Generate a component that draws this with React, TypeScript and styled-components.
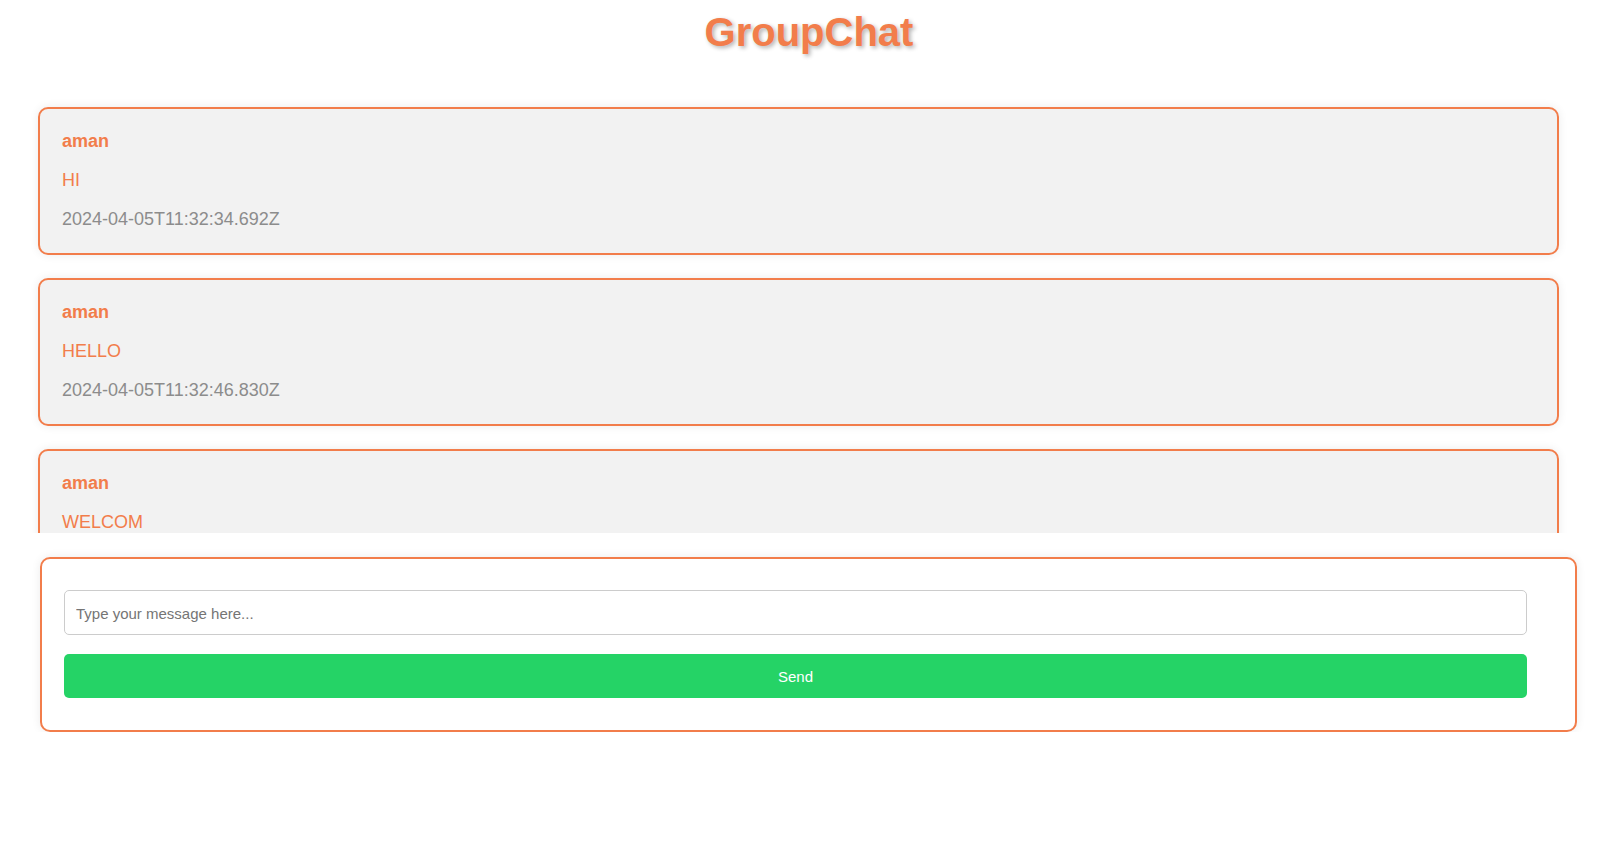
import React, { useState } from "react";
import styled, { createGlobalStyle } from "styled-components";

const ORANGE = "#f27d4b";

const GlobalStyle = createGlobalStyle`
  html, body {
    margin: 0;
    padding: 0;
    background: #ffffff;
    font-family: "Liberation Sans", Arial, sans-serif;
  }
`;

type Message = {
  user: string;
  text: string;
  createdAt: string;
};

const messages: Message[] = [
  { user: "aman", text: "HI", createdAt: "2024-04-05T11:32:34.692Z" },
  { user: "aman", text: "HELLO", createdAt: "2024-04-05T11:32:46.830Z" },
  { user: "aman", text: "WELCOM", createdAt: "2024-04-05T11:33:02.114Z" },
];

export default function App() {
  const [value, setValue] = useState("");

  return (
    <>
      <GlobalStyle />
      <SPage>
        <STitle>GroupChat</STitle>
        <SMessageList>
          {messages.map((m, i) => (
            <SMessageCard key={i}>
              <SUser>{m.user}</SUser>
              <SText>{m.text}</SText>
              <STime>{m.createdAt}</STime>
            </SMessageCard>
          ))}
        </SMessageList>
        <SForm onSubmit={(e) => e.preventDefault()}>
          <SInput
            type="text"
            placeholder="Type your message here..."
            value={value}
            onChange={(e) => setValue(e.target.value)}
          />
          <SButton type="submit">Send</SButton>
        </SForm>
      </SPage>
    </>
  );
}

const SPage = styled.div`
  display: flex;
  flex-direction: column;
  padding-top: 9px;
`;

const STitle = styled.h1`
  margin: 0;
  padding-left: 11px;
  text-align: center;
  font-size: 40px;
  line-height: 46px;
  font-weight: bold;
  color: ${ORANGE};
  text-shadow: 2px 2px 4px rgba(0, 0, 0, 0.3);
`;

const SMessageList = styled.div`
  margin-top: 42px;
  height: 436px;
  overflow: hidden;
  padding: 10px 48px 0 38px;
  box-sizing: border-box;
`;

const SMessageCard = styled.div`
  background: #f2f2f2;
  border: 2px solid ${ORANGE};
  border-radius: 10px;
  padding: 22px 21px 23px 22px;
  margin-bottom: 23px;
  box-shadow: 0 0 10px rgba(0, 0, 0, 0.08);
`;

const SLine = styled.p`
  margin: 0 0 18px;
  font-size: 18px;
  line-height: 21px;
`;

const SUser = styled(SLine)`
  font-weight: bold;
  color: ${ORANGE};
`;

const SText = styled(SLine)`
  color: ${ORANGE};
`;

const STime = styled(SLine)`
  margin-bottom: 0;
  color: #8c8c8c;
`;

const SForm = styled.form`
  margin: 24px 30px 0 40px;
  padding: 31px 48px 32px 22px;
  background: #ffffff;
  border: 2px solid ${ORANGE};
  border-radius: 10px;
  box-shadow: 0 0 10px rgba(0, 0, 0, 0.08);
  display: flex;
  flex-direction: column;
  gap: 19px;
`;

const SInput = styled.input`
  height: 45px;
  box-sizing: border-box;
  padding: 1px 11px 0;
  border: 1px solid #cccccc;
  border-radius: 5px;
  font-family: "Liberation Sans", Arial, sans-serif;
  font-size: 15px;
  color: #333;
  outline: none;

  &::placeholder {
    color: #757575;
  }
`;

const SButton = styled.button`
  height: 44px;
  border: none;
  border-radius: 5px;
  background: #25d366;
  color: #ffffff;
  font-family: "Liberation Sans", Arial, sans-serif;
  font-size: 15px;
  cursor: pointer;
`;
